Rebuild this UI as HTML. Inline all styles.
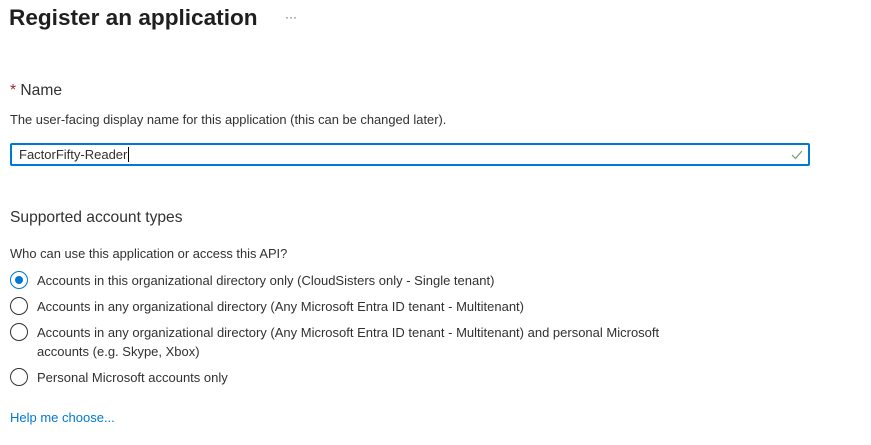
<!DOCTYPE html>
<html><head><style>
body{margin:0;width:871px;height:445px;background:#fff;font-family:"Liberation Sans",sans-serif;color:#323130;position:relative;overflow:hidden}
.a{position:absolute;white-space:nowrap}
.r{position:absolute;left:10px;width:18px;height:18px;border:1.3px solid #323130;border-radius:50%;box-sizing:border-box}
.t{position:absolute;left:37px;font-size:13px;line-height:19px}
</style></head><body>
<div class="a" style="left:9px;top:5px;font-size:22.6px;font-weight:bold;color:#201f1e">Register an application</div>
<div class="a" style="left:285px;top:10px;font-size:12px;color:#605e5c">···</div>
<div class="a" style="left:10px;top:82px;font-size:15.6px"><span style="color:#a4262c">*</span> Name</div>
<div class="a" style="left:10px;top:112px;font-size:12.9px">The user-facing display name for this application (this can be changed later).</div>
<div class="a" style="left:10px;top:143px;width:800px;height:23px;border:2px solid #0078d4;box-sizing:border-box;border-radius:2px"></div>
<div class="a" style="left:19px;top:147px;font-size:13px">FactorFifty-Reader<span style="border-left:1px solid #000;margin-left:1px"></span></div>
<svg class="a" style="left:790px;top:149px" width="14" height="12"><path d="M2 6l3.5 3.5L12 2" stroke="#6e9e6e" stroke-width="1.2" fill="none"/></svg>
<div class="a" style="left:10px;top:209px;font-size:15.6px">Supported account types</div>
<div class="a" style="left:10px;top:246px;font-size:12.9px">Who can use this application or access this API?</div>
<div class="r" style="top:271px;border-color:#0078d4"><div style="position:absolute;left:3.7px;top:3.7px;width:8px;height:8px;border-radius:50%;background:#0078d4"></div></div>
<div class="t" style="top:271px">Accounts in this organizational directory only (CloudSisters only - Single tenant)</div>
<div class="r" style="top:297px"></div>
<div class="t" style="top:297px">Accounts in any organizational directory (Any Microsoft Entra ID tenant - Multitenant)</div>
<div class="r" style="top:323px"></div>
<div class="t" style="top:323px">Accounts in any organizational directory (Any Microsoft Entra ID tenant - Multitenant) and personal Microsoft<br>accounts (e.g. Skype, Xbox)</div>
<div class="r" style="top:368px"></div>
<div class="t" style="top:368px">Personal Microsoft accounts only</div>
<div class="a" style="left:10px;top:410px;font-size:13px;color:#0078d4">Help me choose...</div>
</body></html>
